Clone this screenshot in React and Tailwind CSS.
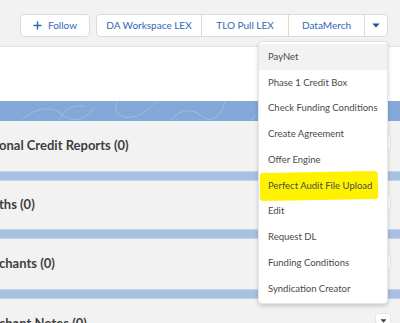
import React from 'react';

const menuItems = [
    "PayNet",
    "Phase 1 Credit Box",
    "Check Funding Conditions",
    "Create Agreement",
    "Offer Engine",
    "Perfect Audit File Upload",
    "Edit",
    "Request DL",
    "Funding Conditions",
    "Syndication Creator",
];

const sections = [
    { label: "onal Credit Reports (0)", h: "h-[50px]" },
    { label: "ths (0)", h: "h-[48px]" },
    { label: "chants (0)", h: "h-[50px]" },
    { label: "chant Notes (0)", h: "h-[50px]" },
];

const Caret = ({ className }) => (
    <svg viewBox="0 0 10 6" className={className}>
        <path d="M0.5 0.5 L9.5 0.5 L5 5.5 Z" fill="currentColor" />
    </svg>
);

const App = () => {
    return (
        <div className="relative w-[400px] h-[323px] overflow-hidden bg-white font-['Lato','Open_Sans',sans-serif]">
            {/* header actions */}
            <div className="h-[47px] bg-[#f3f2f2] border-b border-[#e4e2e1] flex items-start pt-[14px] pl-[20px] gap-[6px]">
                <button className="h-[23px] w-[70px] bg-white border border-[#dddbda] rounded-[4px] flex items-center justify-center gap-[6px] text-[10px] text-[#2f68b3]">
                    <svg viewBox="0 0 10 10" className="w-[9px] h-[9px]">
                        <path d="M5 0.5 V9.5 M0.5 5 H9.5" stroke="currentColor" strokeWidth="1.6" />
                    </svg>
                    Follow
                </button>
                <div className="h-[23px] flex bg-white border border-[#dddbda] rounded-[4px] text-[10px] text-[#2f68b3]">
                    <div className="w-[105px] flex items-center justify-center border-r border-[#dddbda]">DA Workspace LEX</div>
                    <div className="w-[87px] flex items-center justify-center border-r border-[#dddbda]">TLO Pull LEX</div>
                    <div className="w-[76px] flex items-center justify-center border-r border-[#dddbda]">DataMerch</div>
                    <div className="w-[22px] flex items-center justify-center">
                        <Caret className="w-[8px] h-[5px] text-[#1f4e96]" />
                    </div>
                </div>
            </div>

            <div className="h-[54px] bg-white" />

            {/* banner with faint contour pattern */}
            <div className="h-[20px] bg-[#84a9d8] overflow-hidden">
                <svg viewBox="0 0 400 20" className="w-[400px] h-[20px]" fill="none" stroke="#a3c0e4" strokeWidth="0.8">
                    <path d="M20 22 C30 8 50 4 60 12 S80 24 95 6" />
                    <path d="M58 22 C62 10 72 2 86 6" />
                    <path d="M120 -2 C110 8 118 18 132 16 S150 4 160 -2" />
                    <path d="M170 22 C175 10 190 6 200 14 S220 20 226 -2" />
                    <path d="M250 22 C258 8 270 6 280 12" />
                    <path d="M300 -2 C306 10 320 14 334 8" />
                    <path d="M345 22 C350 10 364 4 380 10" />
                </svg>
            </div>

            {sections.map((s, i) => (
                <div key={i}>
                    {i > 0 && <div className="h-[10px] bg-[#a9c1e1] border-y border-[#c5d4e8]" />}
                    <div className={`${s.h} relative bg-[#f3f2f2] flex items-center text-[13px] font-bold text-[#3e3e3c]`}>
                        <span className="-ml-[1px] whitespace-nowrap">{s.label}</span>
                        <div className="absolute right-[9px] top-[14px] w-[16px] h-[16px] bg-white border border-[#e8e6e5] rounded-[3px] flex items-center justify-center">
                            <Caret className="w-[7px] h-[4px] text-[#3e3e3c]" />
                        </div>
                    </div>
                </div>
            ))}

            {/* dropdown menu */}
            <div className="absolute left-[258px] top-[41px] w-[130px] pt-[2px] pb-[1px] bg-white border border-[#e5e5e5] rounded-[4px] shadow-[0_2px_4px_rgba(0,0,0,0.18)]">
                {menuItems.map((item, i) => (
                    <div
                        key={item}
                        className={`relative h-[25.75px] flex items-center px-[9px] text-[9.5px] text-[#4a4a48] ${i === 0 ? 'bg-[#f3f2f2]' : ''}`}
                    >
                        {i === 5 && (
                            <div className="absolute left-[1px] top-[-1px] w-[118px] h-[28px] bg-[#fff200] rounded-[3px] -rotate-[1deg]" />
                        )}
                        <span className="relative whitespace-nowrap">{item}</span>
                    </div>
                ))}
            </div>
        </div>
    );
};

export default App;
